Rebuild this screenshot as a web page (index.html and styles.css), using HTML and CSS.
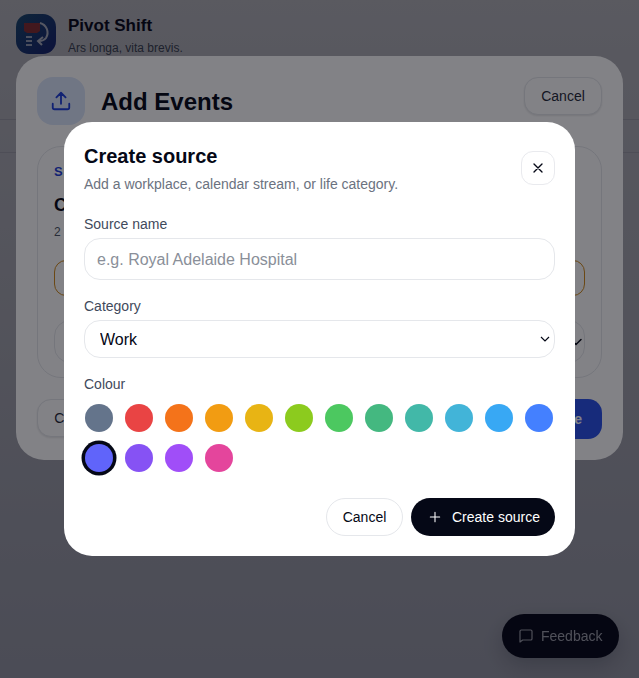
FILE: index.html
```html
<!DOCTYPE html>
<html>
<head>
    <meta charset="UTF-8">
    <meta name="viewport" content="width=device-width, initial-scale=1.0">
    <title>Pivot Shift</title>
    <link rel="stylesheet" href="styles.css">
</head>
<body>
    <header class="app-header">
        <svg class="app-logo" viewBox="0 0 40 40" aria-hidden="true">
            <defs>
                <linearGradient id="logoBg" x1="0" y1="0" x2="1" y2="1">
                    <stop offset="0" stop-color="#1d5f8a"/>
                    <stop offset="1" stop-color="#1b2a8c"/>
                </linearGradient>
            </defs>
            <rect width="40" height="40" rx="13" fill="url(#logoBg)"/>
            <path d="M8 9h16v8l-3 2H11l-3-2z" fill="#b23a3a"/>
            <path d="M10 23h6M10 27h6M10 31h6" stroke="#c9d4ee" stroke-width="2"/>
            <path d="M24 9a10 10 0 0 1 6 15c-1.500 2-4 3-7 3" fill="none" stroke="#e8eefc" stroke-width="2"/>
            <path d="M27 23l-5 4 4 4" fill="none" stroke="#e8eefc" stroke-width="2"/>
        </svg>
        <div>
            <div class="app-name">Pivot Shift</div>
            <div class="app-tagline">Ars longa, vita brevis.</div>
        </div>
    </header>
    <nav class="app-nav"></nav>

    <button class="feedback-button" type="button">
        <svg class="icon" viewBox="0 0 24 24" aria-hidden="true"><path d="M3 5a2 2 0 0 1 2-2h14a2 2 0 0 1 2 2v11a2 2 0 0 1-2 2H7l-4 3z"/></svg>
        Feedback
    </button>

    <div class="overlay overlay-events">
        <section class="events-panel">
            <div class="events-head">
                <span class="events-icon">
                    <svg class="icon" viewBox="0 0 24 24" aria-hidden="true"><path d="M12 15V3M7 8l5-5 5 5M3 15v4a2 2 0 0 0 2 2h14a2 2 0 0 0 2-2v-4"/></svg>
                </span>
                <h1>Add Events</h1>
                <button class="ghost-button" type="button">Cancel</button>
            </div>
            <div class="events-card">
                <div class="card-kicker">S</div>
                <div class="card-title">C</div>
                <div class="card-meta">2</div>
                <div class="amber-box"></div>
                <div class="fake-select">
                    <svg class="icon" viewBox="0 0 24 24" aria-hidden="true"><path d="M6 9l6 6 6-6"/></svg>
                </div>
            </div>
            <div class="events-foot">
                <button class="ghost-button" type="button">Cancel</button>
                <button class="primary-blue" type="button">Save</button>
            </div>
        </section>
    </div>

    <div class="overlay overlay-source">
        <form class="source-modal">
            <div class="modal-head">
                <div>
                    <h2>Create source</h2>
                    <p>Add a workplace, calendar stream, or life category.</p>
                </div>
                <button class="close-button" type="button" aria-label="Close">
                    <svg class="icon" viewBox="0 0 24 24" aria-hidden="true"><path d="M6 6l12 12M18 6L6 18"/></svg>
                </button>
            </div>

            <label for="sourceName">Source name</label>
            <input type="text" id="sourceName" placeholder="e.g. Royal Adelaide Hospital">

            <label for="category">Category</label>
            <select id="category">
                <option>Work</option>
                <option>Study</option>
                <option>Life</option>
            </select>

            <label>Colour</label>
            <div class="swatches">
                <span class="swatch c-slate"></span>
                <span class="swatch c-red"></span>
                <span class="swatch c-orange"></span>
                <span class="swatch c-amber"></span>
                <span class="swatch c-yellow"></span>
                <span class="swatch c-lime"></span>
                <span class="swatch c-green"></span>
                <span class="swatch c-emerald"></span>
                <span class="swatch c-teal"></span>
                <span class="swatch c-cyan"></span>
                <span class="swatch c-sky"></span>
                <span class="swatch c-blue"></span>
                <span class="swatch c-indigo selected"></span>
                <span class="swatch c-violet"></span>
                <span class="swatch c-purple"></span>
                <span class="swatch c-pink"></span>
            </div>

            <div class="modal-foot">
                <button class="outline-button" type="button">Cancel</button>
                <button class="dark-button" type="submit">
                    <svg class="icon" viewBox="0 0 24 24" aria-hidden="true"><path d="M12 5v14M5 12h14"/></svg>
                    Create source
                </button>
            </div>
        </form>
    </div>
</body>
</html>
```
FILE: styles.css
```css
* {
    box-sizing: border-box;
}
html, body {
    height: 100%;
}
body {
    margin: 0;
    font-family: "Liberation Sans", Arial, sans-serif;
    background: linear-gradient(#f6f6f6, #cccfd8);
    color: #050816;
    overflow: hidden;
}
button, input, select {
    font-family: inherit;
}
.icon {
    width: 18px;
    height: 18px;
    fill: none;
    stroke: currentColor;
    stroke-width: 2;
    stroke-linecap: round;
    stroke-linejoin: round;
    flex: none;
}
.app-header {
    display: flex;
    gap: 12px;
    padding: 14px 16px 0;
    height: 120px;
    border-bottom: 1px solid #d4d6dc;
}
.app-logo {
    width: 40px;
    height: 40px;
}
.app-name {
    font-size: 17px;
    font-weight: 700;
    line-height: 24px;
}
.app-tagline {
    font-size: 12px;
    color: #4b5563;
    line-height: 20px;
}
.app-nav {
    height: 33px;
    border-bottom: 1px solid #d4d6dc;
}
.feedback-button {
    position: fixed;
    right: 20px;
    bottom: 20px;
    display: flex;
    align-items: center;
    gap: 7px;
    height: 44px;
    width: 117px;
    padding: 0 16px;
    border: none;
    border-radius: 22px;
    background: #050816;
    color: #d8dae2;
    font-size: 14px;
    box-shadow: 0 8px 20px rgba(5, 8, 22, 0.2);
}
.feedback-button .icon {
    width: 16px;
    height: 16px;
    stroke-width: 1.8;
}
.overlay {
    position: fixed;
    top: 0;
    left: 0;
    right: 0;
    bottom: 0;
}
.overlay-events {
    background: rgba(5, 8, 22, 0.3);
    padding: 56px 16px 0;
}
.overlay-source {
    display: flex;
    align-items: center;
    justify-content: center;
    background: rgba(5, 6, 14, 0.5);
    backdrop-filter: blur(0.5px);
}
.events-panel {
    height: 404px;
    padding: 21px 21px 0;
    background: #fff;
    border-radius: 28px;
}
.events-head {
    display: flex;
    align-items: flex-start;
    gap: 16px;
}
.events-head h1 {
    flex: 1;
    margin: 11px 0 0;
    font-size: 24px;
    font-weight: 700;
    line-height: 28px;
}
.events-icon {
    display: flex;
    align-items: center;
    justify-content: center;
    width: 48px;
    height: 48px;
    border-radius: 16px;
    background: #dbe6fb;
    color: #1d3fd8;
}
.events-icon .icon {
    width: 22px;
    height: 22px;
}
.ghost-button {
    width: 78px;
    height: 38px;
    border: 1px solid #e5e7eb;
    border-radius: 14px;
    background: #fff;
    color: #1f2937;
    font-size: 14px;
    box-shadow: 0 1px 2px rgba(5, 8, 22, 0.1);
}
.events-card {
    margin-top: 21px;
    height: 232px;
    padding: 17px 16px;
    border: 1px solid #e5e7eb;
    border-radius: 24px;
}
.card-kicker {
    color: #1d3fd8;
    font-size: 13px;
    font-weight: 700;
}
.card-title {
    margin-top: 16px;
    font-size: 18px;
    font-weight: 700;
}
.card-meta {
    margin-top: 9px;
    font-size: 12px;
    color: #4b5563;
}
.amber-box {
    height: 36px;
    margin-top: 21px;
    border: 1.5px solid #d08a1a;
    border-radius: 12px;
    background: #fff;
}
.fake-select {
    display: flex;
    align-items: center;
    justify-content: flex-end;
    height: 43px;
    margin-top: 24px;
    border: 1px solid #e5e7eb;
    border-radius: 16px;
}
.fake-select .icon {
    width: 20px;
    height: 20px;
    margin-right: -2px;
    stroke-width: 1.8;
}
.events-foot {
    display: flex;
    justify-content: space-between;
    margin-top: 21px;
}
.primary-blue {
    height: 40px;
    padding: 0 20px;
    border: none;
    border-radius: 14px;
    background: #2850e8;
    color: #fff;
    font-size: 14px;
    font-weight: 700;
}
.source-modal {
    display: flex;
    flex-direction: column;
    width: 511px;
    height: 434px;
    padding: 20px;
    background: #fff;
    border-radius: 28px;
}
.modal-head {
    display: flex;
    justify-content: space-between;
    align-items: center;
    margin-bottom: 20px;
}
.modal-head h2 {
    margin: 0;
    font-size: 20px;
    font-weight: 700;
    line-height: 28px;
}
.modal-head p {
    margin: 4px 0 0;
    font-size: 14px;
    line-height: 20px;
    color: #6b7280;
}
.close-button {
    display: flex;
    align-items: center;
    justify-content: center;
    width: 34px;
    height: 34px;
    padding: 0;
    border: 1px solid #e9eaee;
    border-radius: 12px;
    background: #fff;
    color: #050816;
}
.close-button .icon {
    width: 16px;
    height: 16px;
}
label {
    margin-bottom: 4px;
    font-size: 14px;
    line-height: 20px;
    color: #3f4a5c;
}
input, select {
    margin-bottom: 16px;
    border: 1px solid #e5e7eb;
    border-radius: 16px;
    background: #fff;
    font-size: 16px;
    color: #050816;
}
input {
    height: 42px;
    padding: 1px 12px 0;
}
input::placeholder {
    color: #8a8f99;
}
select {
    height: 38px;
    padding: 0 0 0 15px;
    appearance: none;
    background: #fff url("data:image/svg+xml,%3Csvg xmlns='http://www.w3.org/2000/svg' width='10' height='6'%3E%3Cpath d='M1 1l4 4 4-4' fill='none' stroke='%23050816' stroke-width='1.2'/%3E%3C/svg%3E") no-repeat right 4px center;
}
.swatches {
    display: grid;
    grid-template-columns: repeat(12, 30px);
    gap: 10px;
    margin-top: 5px;
}
.swatch {
    width: 28px;
    height: 28px;
    margin: 1px;
    border-radius: 50%;
}
.swatch.selected {
    box-shadow: 0 0 0 3.5px #050816;
}
.c-slate { background: #64748b; }
.c-red { background: #e94444; }
.c-orange { background: #f4731a; }
.c-amber { background: #f29c12; }
.c-yellow { background: #e8b414; }
.c-lime { background: #8ccb1e; }
.c-green { background: #4cc860; }
.c-emerald { background: #44b880; }
.c-teal { background: #42b8a8; }
.c-cyan { background: #42b4d8; }
.c-sky { background: #38a8f4; }
.c-blue { background: #4480ff; }
.c-indigo { background: #6064fa; }
.c-violet { background: #8652f4; }
.c-purple { background: #a04ef8; }
.c-pink { background: #e4459c; }
.modal-foot {
    display: flex;
    justify-content: flex-end;
    gap: 8px;
    margin-top: auto;
}
.outline-button, .dark-button {
    height: 38px;
    border-radius: 19px;
    font-size: 14px;
}
.outline-button {
    width: 77px;
    border: 1px solid #e5e7eb;
    background: #fff;
    color: #050816;
}
.dark-button {
    display: flex;
    align-items: center;
    gap: 9px;
    width: 144px;
    padding: 0 16px;
    border: none;
    background: #050816;
    color: #fff;
    white-space: nowrap;
}
.dark-button .icon {
    width: 16px;
    height: 16px;
    stroke-width: 1.6;
}
```
